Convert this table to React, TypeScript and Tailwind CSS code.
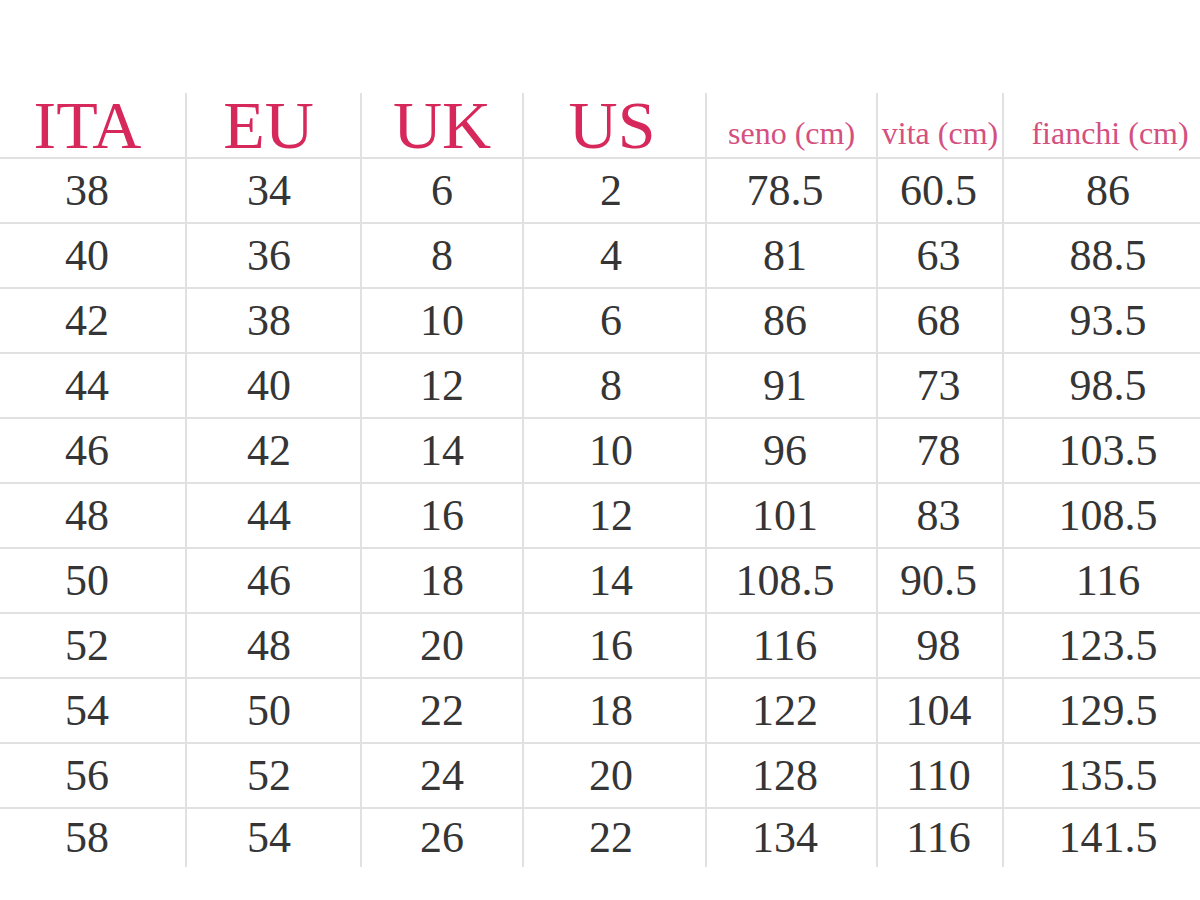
const headers = [
  { label: "ITA", big: true, pad: "pr-[10px]" },
  { label: "EU", big: true, pad: "pr-[10px]" },
  { label: "UK", big: true, pad: "" },
  { label: "US", big: true, pad: "pr-[5px]" },
  { label: "seno (cm)", big: false, pad: "" },
  { label: "vita (cm)", big: false, pad: "" },
  { label: "fianchi (cm)", big: false, pad: "pl-[16px]" },
];

// padding that nudges the numbers to where they sit in each column
const dataPad = ["pr-[11px]", "pr-[9px]", "", "pr-[7px]", "pr-[13px]", "pr-[3px]", "pl-[12px]"];

const rows: string[][] = [
  ["38", "34", "6", "2", "78.5", "60.5", "86"],
  ["40", "36", "8", "4", "81", "63", "88.5"],
  ["42", "38", "10", "6", "86", "68", "93.5"],
  ["44", "40", "12", "8", "91", "73", "98.5"],
  ["46", "42", "14", "10", "96", "78", "103.5"],
  ["48", "44", "16", "12", "101", "83", "108.5"],
  ["50", "46", "18", "14", "108.5", "90.5", "116"],
  ["52", "48", "20", "16", "116", "98", "123.5"],
  ["54", "50", "22", "18", "122", "104", "129.5"],
  ["56", "52", "24", "20", "128", "110", "135.5"],
  ["58", "54", "26", "22", "134", "116", "141.5"],
];

export default function App() {
  return (
    <div className="h-[900px] w-[1200px] overflow-hidden bg-white pt-[93px] font-['Liberation_Serif',serif]">
      <div className="grid grid-cols-[185px_175px_162px_183px_171px_126px_198px]">
        {/* header row */}
        {headers.map((h, i) => (
          <div
            key={h.label}
            className={`flex h-[64px] items-center justify-center ${i > 0 ? "border-l-2 border-[#e1e1e1]" : ""} ${h.pad}`}
          >
            {h.big ? (
              <span className="text-[68px] leading-none text-[#d7285b]">{h.label}</span>
            ) : (
              <span className="pt-[16px] text-[32px] leading-none whitespace-nowrap text-[#d4507f]">{h.label}</span>
            )}
          </div>
        ))}

        {/* data rows */}
        {rows.map((row, r) =>
          row.map((cell, c) => (
            <div
              key={`${r}-${c}`}
              className={`flex items-center justify-center border-t-2 border-[#e1e1e1] ${
                r === rows.length - 1 ? "h-[60px]" : "h-[65px]"
              } ${c > 0 ? "border-l-2" : ""} ${dataPad[c]}`}
            >
              <span className="text-[44px] leading-none text-[#353535]">{cell}</span>
            </div>
          ))
        )}
      </div>
    </div>
  );
}
